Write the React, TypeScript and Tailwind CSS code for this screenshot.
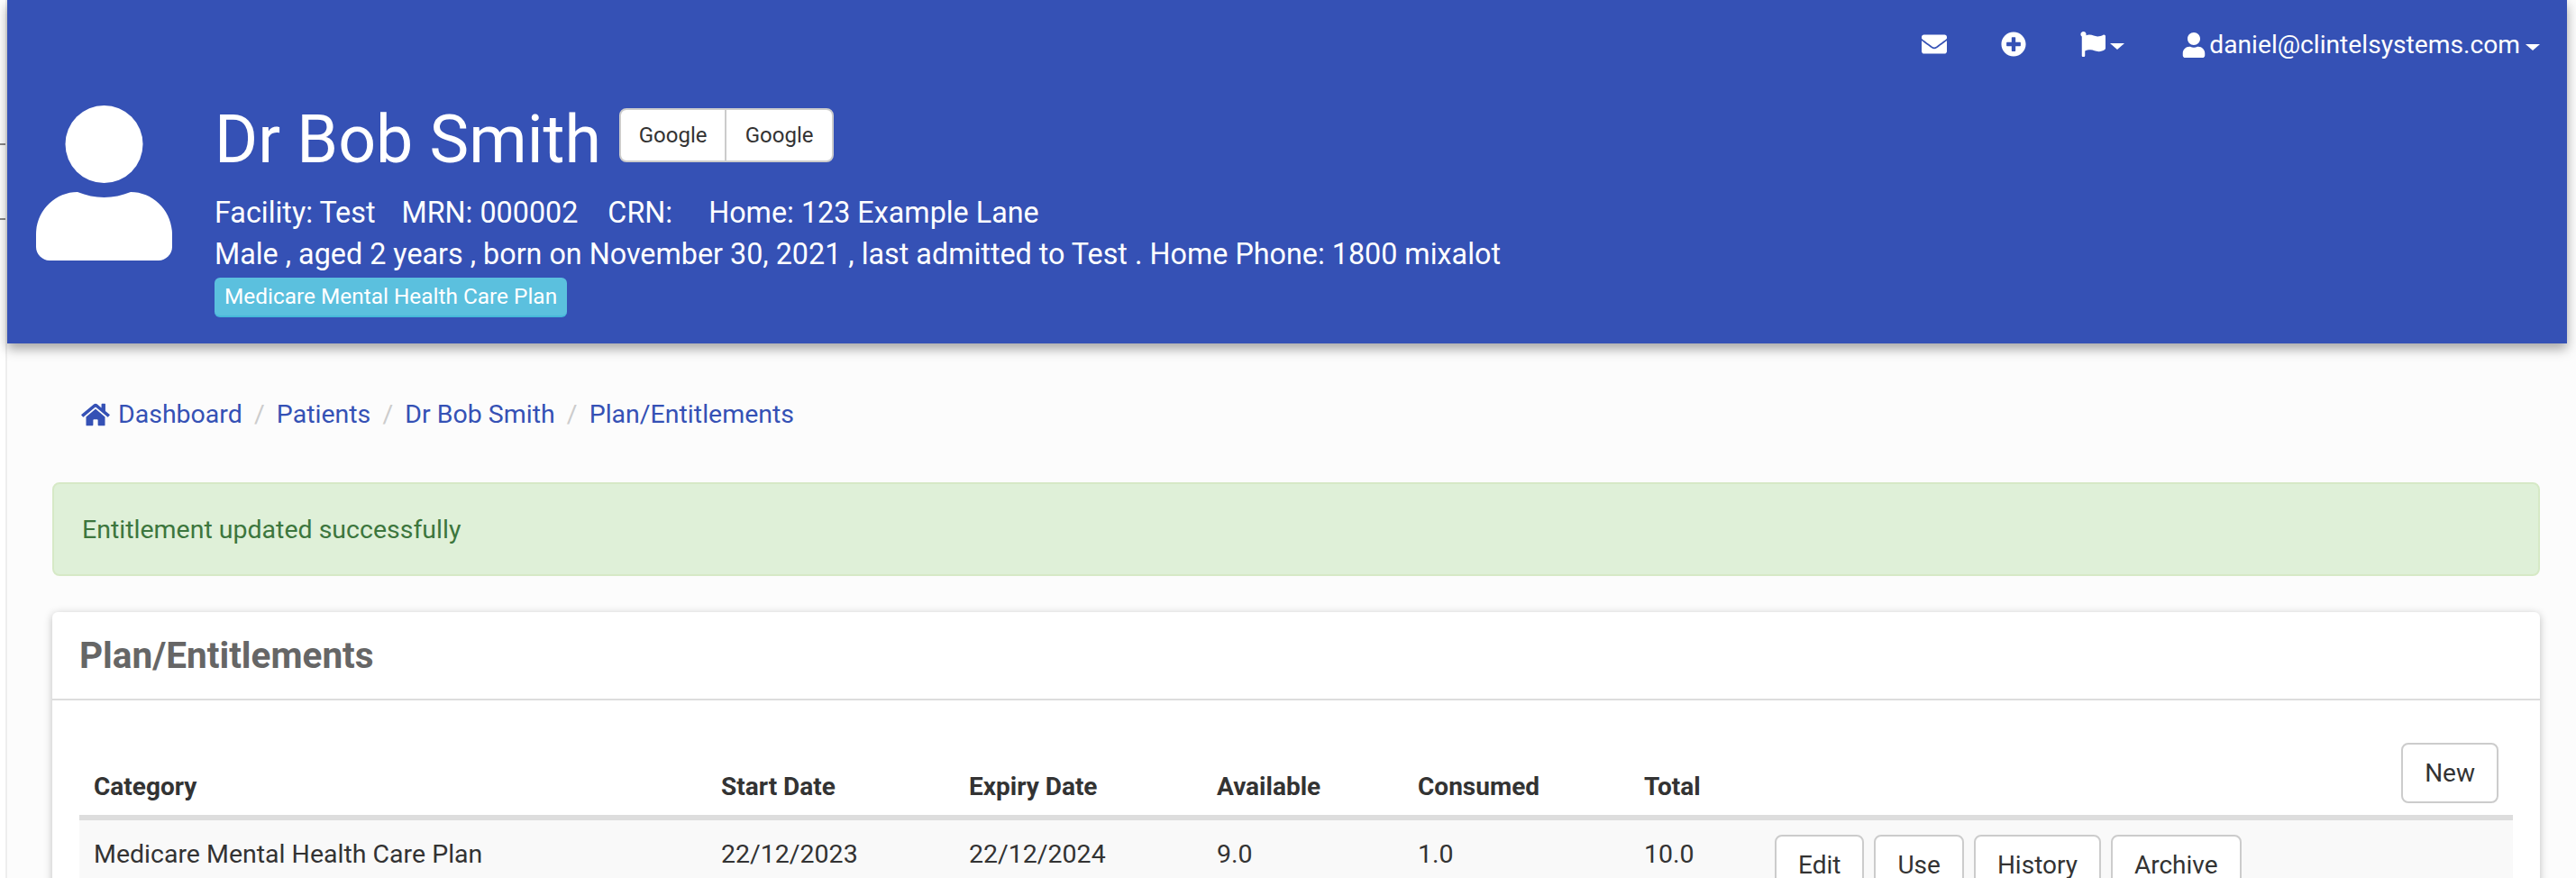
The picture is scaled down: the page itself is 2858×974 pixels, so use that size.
import { FaEnvelope, FaFlag, FaHome, FaPlusCircle, FaUser } from "react-icons/fa";

const CRUMBS = ["Patients", "Dr Bob Smith", "Plan/Entitlements"];
const HEADERS = ["Category", "Start Date", "Expiry Date", "Available", "Consumed", "Total"];
const ROW = ["Medicare Mental Health Care Plan", "22/12/2023", "22/12/2024", "9.0", "1.0", "10.0"];
const ACTIONS = ["Edit", "Use", "History", "Archive"];

function Caret() {
  return <span className="inline-block w-0 h-0 border-x-[8px] border-x-transparent border-t-[7px] border-t-white" />;
}

function OutlineButton({ label }: { label: string }) {
  return (
    <button className="h-[67px] px-[24px] bg-white border-2 border-[#ccc] rounded-[8px] text-[28px] leading-[40px] text-[#333]">
      {label}
    </button>
  );
}

function Avatar() {
  return (
    <svg viewBox="0 0 151 172" className="w-[151px] h-[172px] shrink-0 fill-white">
      <circle cx="75.5" cy="43" r="43" />
      <path d="M46 96c10 3.800 19 6 29.500 6s19.500-2.200 29.500-6c25 0 46 21 46 47v14c0 8-7 15-15 15H15c-8 0-15-7-15-15v-14c0-26 21-47 46-47z" />
    </svg>
  );
}

export default function App() {
  return (
    <div className="flex w-full h-[974px] overflow-hidden bg-[#fcfcfc] font-['Roboto',sans-serif] text-[28.5px] leading-[40px] text-[#333]">
      <div className="relative w-[8px] shrink-0 bg-white border-r-2 border-[#eee]">
        <div className="absolute left-0 top-[159px] w-[6px] h-[2px] bg-[#888]" />
        <div className="absolute left-0 top-[242px] w-[6px] h-[2px] bg-[#888]" />
      </div>

      <div className="flex-1 min-w-0 flex flex-col">
        <header className="h-[381px] shrink-0 mr-[10px] bg-[#3551b5] text-white shadow-[0_6px_12px_rgba(0,0,0,0.35)] relative z-10">
          <nav className="h-[96px] flex items-start justify-end pr-[30px] pt-[30px] text-[28.2px]">
            <FaEnvelope className="w-[28px] h-[28px] mt-[5px]" />
            <FaPlusCircle className="w-[28px] h-[28px] mt-[5px] ml-[60px]" />
            <span className="flex items-center ml-[60px] mt-[5px] h-[28px]">
              <FaFlag className="w-[28px] h-[28px]" />
              <span className="ml-[5px] mt-[4px] flex"><Caret /></span>
            </span>
            <span className="flex items-center ml-[64px] h-[40px]">
              <FaUser className="w-[26px] h-[28px] mr-[4px]" />
              <span>daniel@clintelsystems.com</span>
              <span className="ml-[6px] mt-[4px] flex"><Caret /></span>
            </span>
          </nav>

          <div className="flex pl-[32px] pt-[21px]">
            <Avatar />
            <div className="ml-[47px] -mt-[2px] min-w-0">
              <div className="flex items-start h-[86px]">
                <h1 className="text-[73.5px] leading-[86px] font-normal -mt-[3px]">Dr Bob Smith</h1>
                <div className="flex ml-[20px] mt-[5px] h-[60px] bg-white border-2 border-[#ccc] rounded-[8px] text-[#333] text-[24px]">
                  <button className="w-[117px] border-r-2 border-[#ccc]">Google</button>
                  <button className="w-[117px]">Google</button>
                </div>
              </div>
              <div className="mt-[12px] flex whitespace-pre text-[32.3px] leading-[47px]">
                <span>Facility: Test</span>
                <span className="ml-[29px]">MRN: 000002</span>
                <span className="ml-[33px]">CRN:</span>
                <span className="ml-[40px]">Home: 123 Example Lane</span>
              </div>
              <div className="whitespace-pre text-[32.3px] leading-[44px]">Male , aged 2 years , born on November 30, 2021 , last admitted to Test . Home Phone: 1800 mixalot</div>
              <span className="inline-flex items-center h-[44px] px-[11px] mt-[4px] rounded-[6px] bg-[#5bc0de] border-b-2 border-[#46b8da] text-[24.400px] text-white">
                Medicare Mental Health Care Plan
              </span>
            </div>
          </div>
        </header>

        <main className="flex-1 pl-[50px] pr-[40px]">
          <ol className="flex items-center h-[40px] mt-[59px] pl-[32px] text-[#3551b5]">
            <li className="flex items-center">
              <FaHome className="w-[32px] h-[28px] mr-[9px]" />
              <a>Dashboard</a>
            </li>
            {CRUMBS.map((c) => (
              <li key={c} className="flex items-center">
                <span className="w-[38px] text-center text-[#ccc]">/</span>
                <a>{c}</a>
              </li>
            ))}
          </ol>

          <div className="mt-[55px] h-[104px] flex items-center pl-[31px] pt-[2px] bg-[#dff0d8] border-2 border-[#d6e9c6] rounded-[8px] text-[#3c763d]">
            Entitlement updated successfully
          </div>

          <section className="mt-[40px] bg-white rounded-[6px] shadow-[0_2px_10px_rgba(0,0,0,0.25)]">
            <div className="h-[98px] flex items-center pl-[30px] border-b-2 border-[#ddd]">
              <h2 className="text-[40.500px] font-bold text-[#666]">Plan/Entitlements</h2>
            </div>

            <div className="px-[30px] pt-[47px]">
              <table className="w-[2700px] table-fixed border-collapse">
                <colgroup>
                  <col className="w-[696px]" />
                  <col className="w-[275px]" />
                  <col className="w-[275px]" />
                  <col className="w-[223px]" />
                  <col className="w-[251px]" />
                  <col className="w-[145px]" />
                  <col />
                </colgroup>
                <thead>
                  <tr className="border-b-[6px] border-[#ddd]">
                    {HEADERS.map((h) => (
                      <th key={h} className="px-[16px] pb-[11px] text-left align-bottom font-bold text-[28px]">{h}</th>
                    ))}
                    <th className="pb-[13px] pr-[16px] text-right align-bottom font-normal">
                      <OutlineButton label="New" />
                    </th>
                  </tr>
                </thead>
                <tbody>
                  <tr className="bg-[#f9f9f9]">
                    {ROW.map((v) => (
                      <td key={v} className="px-[16px] pt-[18px] pb-[16px] align-top">{v}</td>
                    ))}
                    <td className="px-[16px] pt-[16px] align-top">
                      <div className="flex gap-[11px]">
                        {ACTIONS.map((a) => (
                          <OutlineButton key={a} label={a} />
                        ))}
                      </div>
                    </td>
                  </tr>
                </tbody>
              </table>
            </div>
          </section>
        </main>
      </div>
    </div>
  );
}
